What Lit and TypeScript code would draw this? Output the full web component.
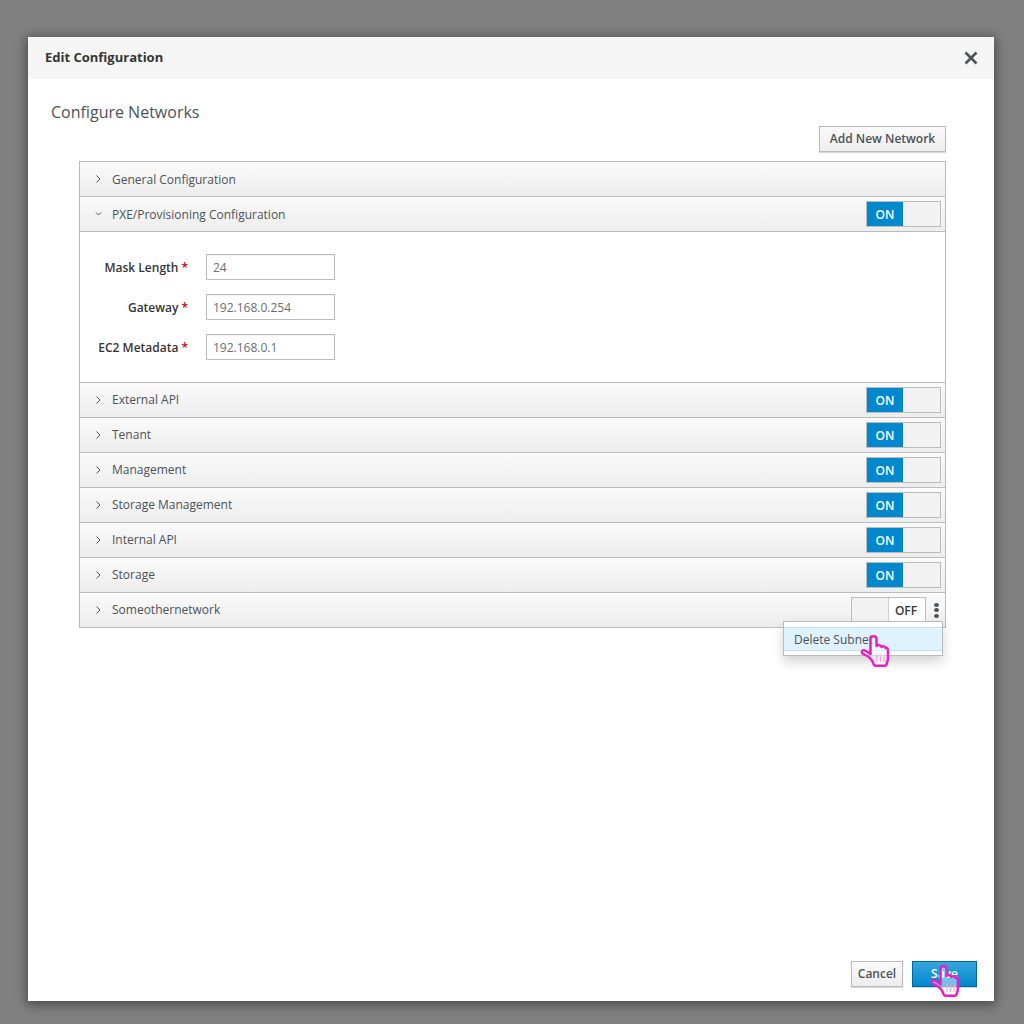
import { LitElement, html, css, svg } from "lit";
import { customElement } from "lit/decorators.js";

const HAND = svg`<svg width="30" height="33" viewBox="0 0 30 33" fill="none">
  <path d="M12.5 26.5 C11.5 24 10 23 8 21.5 L2.5 18.5 C1 17 2.5 14.5 5 15.5 L10.5 19 L10.5 3.8 C10.5 0.4 16.5 0.4 16.5 3.8 L16.5 11 C18 9.5 21 10 21.5 12 C23 10.8 25 11.2 25.5 13 C27 12.2 28 13.5 28 16 L28 23 C28 26 27 27.5 26.5 29.5 C26.3 30.5 25.5 30.8 24.5 30.8 L15.5 30.8 C14 30.8 13.2 29 12.5 26.5 Z" fill="rgba(255,255,255,.45)" stroke="#e91ec3" stroke-width="2.5" stroke-linejoin="round"/>
  <path d="M17 19.5v7.5M20.5 19.5v7.5M24 19.5v7.5" stroke="#f4a8e6" stroke-width="1.2"/>
</svg>`;

const ROWS_AFTER = ["External API", "Tenant", "Management", "Storage Management", "Internal API", "Storage"];

@customElement("app-root")
export class AppRoot extends LitElement {
  static styles = css`
    :host {
      display: block;
      width: 1024px;
      height: 1024px;
      box-sizing: border-box;
      padding: 37px 30px 23px 28px;
      background: #808080;
      font-family: "Open Sans", "Liberation Sans", sans-serif;
      font-size: 12px;
      color: #363636;
    }
    * { box-sizing: border-box; }
    .modal {
      position: relative;
      height: 964px;
      background: #fff;
      display: flex;
      flex-direction: column;
      box-shadow: 0 2px 10px 2px rgba(0,0,0,.42);
    }
    .header {
      height: 42px;
      flex: none;
      background: #f5f5f5;
      padding: 0 16px 0 17px;
      display: flex;
      align-items: center;
      justify-content: space-between;
    }
    .header h1 {
      margin: 0 0 2px;
      font-size: 13px;
      font-weight: 700;
      color: #363636;
    }
    .close { display: block; }
    .body {
      flex: 1;
      padding: 22px 48px 0 23px;
      display: flex;
      flex-direction: column;
    }
    h2 {
      margin: 0;
      font-size: 16px;
      font-weight: 400;
      line-height: 22px;
      color: #4d5258;
    }
    .toolbar {
      display: flex;
      justify-content: flex-end;
      margin-top: 3px;
      margin-bottom: 9px;
    }
    .btn {
      height: 26px;
      padding-bottom: 2px;
      display: flex;
      align-items: center;
      justify-content: center;
      border: 1px solid #bbb;
      background: linear-gradient(#fafafa, #ededed);
      box-shadow: 0 1px 1px rgba(3,3,3,.15);
      color: #4d5258;
      font-size: 12px;
      font-weight: 600;
    }
    .add { width: 127px; }
    .accordion {
      margin-left: 28px;
      border: 1px solid #bbb;
      border-bottom: none;
      position: relative;
    }
    .row {
      height: 35px;
      border-bottom: 1px solid #bbb;
      background: linear-gradient(#fafafa, #ededed);
      display: flex;
      align-items: center;
      padding: 0 4px 0 14px;
      color: #4d5258;
      font-size: 12px;
    }
    .chev { width: 18px; flex: none; display: block; }
    .label { flex: 1; }
    .row.after .label { margin-bottom: 2px; }
    .toggle {
      width: 75px;
      height: 26px;
      border: 1px solid #bbb;
      display: flex;
      background: #f2f2f2;
      font-weight: 600;
      font-size: 12px;
    }
    .toggle .on {
      width: 36px;
      background: #0088ce;
      color: #fff;
      display: flex;
      align-items: center;
      justify-content: center;
    }
    .toggle .off {
      width: 37px;
      margin-left: auto;
      padding-right: 2px;
      background: #fff;
      border-left: 1px solid #d1d1d1;
      color: #363636;
      display: flex;
      align-items: center;
      justify-content: center;
    }
    .kebab {
      width: 5px;
      margin: 0 2px 0 8px;
      display: flex;
      flex-direction: column;
      gap: 1.5px;
    }
    .kebab i {
      display: block;
      height: 4px;
      border-radius: 50%;
      background: #4d5258;
    }
    .panel {
      height: 151px;
      border-bottom: 1px solid #bbb;
      background: #fff;
      padding-top: 22px;
      display: grid;
      grid-template-columns: 108px 129px;
      column-gap: 18px;
      row-gap: 14px;
      grid-auto-rows: 26px;
    }
    .field-label {
      display: flex;
      align-items: center;
      justify-content: flex-end;
      font-weight: 600;
      color: #363636;
      white-space: nowrap;
    }
    .req { color: #c00; margin-left: 3px; }
    .input {
      border: 1px solid #bbb;
      display: flex;
      align-items: center;
      padding-left: 6px;
      color: #6a6e73;
      box-shadow: inset 0 1px 1px rgba(3,3,3,.05);
    }
    .menu {
      position: absolute;
      left: 703px;
      top: 459px;
      width: 160px;
      height: 35px;
      padding: 5px 0 4px;
      background: #fff;
      border: 1px solid #bbb;
      box-shadow: 0 6px 12px rgba(0,0,0,.175);
    }
    .menu-item {
      height: 24px;
      background: #def3ff;
      border-top: 1px solid #bee1f4;
      border-bottom: 1px solid #bee1f4;
      display: flex;
      align-items: center;
      padding-left: 10px;
      color: #4d5258;
    }
    .footer {
      flex: none;
      padding: 0 17px 14px 0;
      display: flex;
      justify-content: flex-end;
      gap: 9px;
    }
    .cancel { width: 52px; }
    .save {
      width: 65px;
      border-color: #00659c;
      background: linear-gradient(#39a5dc, #0088ce);
      color: #fff;
    }
    .hand { position: absolute; line-height: 0; }
    .hand.one { left: 832px; top: 598px; }
    .hand.two { left: 902px; top: 928px; }
  `;

  private chev(open = false) {
    return open
      ? svg`<svg class="chev" width="18" height="10" viewBox="0 0 18 10" fill="none"><path d="M2 3.5 L4.5 6 L7 3.5" stroke="#4d5258" stroke-width="1"/></svg>`
      : svg`<svg class="chev" width="18" height="10" viewBox="0 0 18 10" fill="none"><path d="M2.5 1.5 L6 5 L2.5 8.5" stroke="#4d5258" stroke-width="1"/></svg>`;
  }

  private on() {
    return html`<div class="toggle"><span class="on">ON</span></div>`;
  }

  private field(label: string, value: string) {
    return html`<div class="field-label">${label}<span class="req">*</span></div><div class="input">${value}</div>`;
  }

  render() {
    return html`
      <div class="modal">
        <div class="header">
          <h1>Edit Configuration</h1>
          <svg class="close" width="14" height="14" viewBox="0 0 14 14"><path d="M1.5 1.5 L12.5 12.5 M12.5 1.5 L1.5 12.5" stroke="#4d5258" stroke-width="2.6" /></svg>
        </div>
        <div class="body">
          <h2>Configure Networks</h2>
          <div class="toolbar"><div class="btn add">Add New Network</div></div>
          <div class="accordion">
            <div class="row">${this.chev()}<span class="label">General Configuration</span></div>
            <div class="row">${this.chev(true)}<span class="label">PXE/Provisioning Configuration</span>${this.on()}</div>
            <div class="panel">
              ${this.field("Mask Length", "24")}
              ${this.field("Gateway", "192.168.0.254")}
              ${this.field("EC2 Metadata", "192.168.0.1")}
            </div>
            ${ROWS_AFTER.map((r) => html`<div class="row after">${this.chev()}<span class="label">${r}</span>${this.on()}</div>`)}
            <div class="row after">${this.chev()}<span class="label">Someothernetwork</span>
              <div class="toggle"><span class="off">OFF</span></div>
              <div class="kebab"><i></i><i></i><i></i></div>
            </div>
            <div class="menu"><div class="menu-item">Delete Subnet</div></div>
          </div>
        </div>
        <div class="footer">
          <div class="btn cancel">Cancel</div>
          <div class="btn save">Save</div>
        </div>
        <div class="hand one">${HAND}</div>
        <div class="hand two">${HAND}</div>
      </div>
    `;
  }
}
